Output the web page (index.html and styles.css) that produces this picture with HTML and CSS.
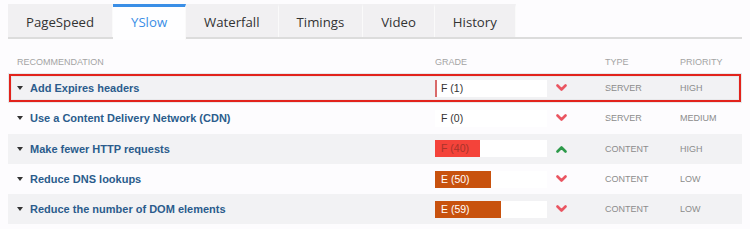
FILE: index.html
```html
<!DOCTYPE html>
<html lang="en">
<head>
    <meta charset="UTF-8">
    <title>YSlow Report</title>
    <link rel="stylesheet" href="styles.css">
</head>
<body>
    <div class="report">
        <div class="tabs">
            <div class="tab">PageSpeed</div>
            <div class="tab active">YSlow</div>
            <div class="tab">Waterfall</div>
            <div class="tab">Timings</div>
            <div class="tab">Video</div>
            <div class="tab">History</div>
        </div>

        <div class="table">
            <div class="row head">
                <div class="cell-name">Recommendation</div>
                <div>Grade</div>
                <div>Type</div>
                <div>Priority</div>
            </div>

            <div class="row shaded flagged">
                <div class="cell-name"><span class="caret"></span><a>Add Expires headers</a></div>
                <div class="cell-grade">
                    <div class="grade grade-f" style="--pct: 2px">F (1)</div>
                    <svg class="chev down" width="11" height="8" viewBox="0 0 11 8"><polyline points="1.5,1.5 5.5,5.5 9.5,1.5"/></svg>
                </div>
                <div class="cell-meta">SERVER</div>
                <div class="cell-meta">HIGH</div>
            </div>

            <div class="row">
                <div class="cell-name"><span class="caret"></span><a>Use a Content Delivery Network (CDN)</a></div>
                <div class="cell-grade">
                    <div class="grade grade-f" style="--pct: 0%">F (0)</div>
                    <svg class="chev down" width="11" height="8" viewBox="0 0 11 8"><polyline points="1.5,1.5 5.5,5.5 9.5,1.5"/></svg>
                </div>
                <div class="cell-meta">SERVER</div>
                <div class="cell-meta">MEDIUM</div>
            </div>

            <div class="row shaded">
                <div class="cell-name"><span class="caret"></span><a>Make fewer HTTP requests</a></div>
                <div class="cell-grade">
                    <div class="grade grade-f bright" style="--pct: 40%">F (40)</div>
                    <svg class="chev up" width="11" height="8" viewBox="0 0 11 8"><polyline points="1.5,6.5 5.5,2.5 9.5,6.5"/></svg>
                </div>
                <div class="cell-meta">CONTENT</div>
                <div class="cell-meta">HIGH</div>
            </div>

            <div class="row">
                <div class="cell-name"><span class="caret"></span><a>Reduce DNS lookups</a></div>
                <div class="cell-grade">
                    <div class="grade grade-e" style="--pct: 50%">E (50)</div>
                    <svg class="chev down" width="11" height="8" viewBox="0 0 11 8"><polyline points="1.5,1.5 5.5,5.5 9.5,1.5"/></svg>
                </div>
                <div class="cell-meta">CONTENT</div>
                <div class="cell-meta">LOW</div>
            </div>

            <div class="row shaded">
                <div class="cell-name"><span class="caret"></span><a>Reduce the number of DOM elements</a></div>
                <div class="cell-grade">
                    <div class="grade grade-e" style="--pct: 59%">E (59)</div>
                    <svg class="chev down" width="11" height="8" viewBox="0 0 11 8"><polyline points="1.5,1.5 5.5,5.5 9.5,1.5"/></svg>
                </div>
                <div class="cell-meta">CONTENT</div>
                <div class="cell-meta">LOW</div>
            </div>
        </div>
    </div>
</body>
</html>
```

FILE: styles.css
```css
body {
    margin: 0;
    background: #fdfcfe;
    font-family: "Liberation Sans", Arial, sans-serif;
    color: #333;
}

.report {
    padding: 4px 8px 0 8px;
}

.tabs {
    display: flex;
    border-bottom: 2px solid #dcdcdc;
    height: 33px;
}

.tab {
    padding: 0 18px;
    font-family: "Open Sans", sans-serif;
    font-size: 13.2px;
    line-height: 30px;
    color: #333;
    background: #f1f0f2;
    border-top: 3px solid transparent;
    border-right: 1px solid #fafafa;
}

.tab.active {
    background: #fefeff;
    color: #3a8ee6;
    border-top-color: #3a8ee6;
    height: 33px;
}

.table {
    margin-top: 13px;
}

.row {
    display: grid;
    grid-template-columns: 427px 170px 75px 1fr;
    align-items: center;
    height: 30.3px;
    background: #fdfcfe;
}

.row.shaded {
    background: #f2f2f4;
}

.row.head {
    height: 19px;
    font-size: 9px;
    color: #a4a4a4;
    text-transform: uppercase;
    background: transparent;
    margin-bottom: 2px;
}

.row.flagged {
    outline: 2px solid #e2231c;
    outline-offset: -3px;
    box-shadow: inset 0 0 0 4px rgba(0, 0, 0, 0.04);
}

.cell-name {
    padding-left: 9px;
    display: flex;
    align-items: center;
}

.caret {
    width: 0;
    height: 0;
    border-left: 3px solid transparent;
    border-right: 3px solid transparent;
    border-top: 4px solid #333;
    margin-right: 7px;
}

.cell-name a {
    font-size: 11px;
    font-weight: bold;
    color: #2b5c8c;
}

.cell-grade {
    display: flex;
    align-items: center;
}

.grade {
    width: 106px;
    height: 17px;
    line-height: 17px;
    padding-left: 6px;
    font-size: 10.5px;
    background: linear-gradient(to right, var(--bar) var(--pct), #ffffff var(--pct));
}

.grade-f {
    --bar: #d96a6a;
    color: #333;
}

.grade-f.bright {
    --bar: #f4433a;
    color: #a8332a;
}

.grade-e {
    --bar: #c8520e;
    color: #fff;
}

.chev {
    margin-left: 9px;
    fill: none;
    stroke-width: 2.6;
    stroke-linecap: round;
    stroke-linejoin: round;
}

.chev.down {
    stroke: #ea5561;
}

.chev.up {
    stroke: #2d9a4a;
}

.cell-meta {
    font-size: 9px;
    color: #8c8c8c;
}
```
